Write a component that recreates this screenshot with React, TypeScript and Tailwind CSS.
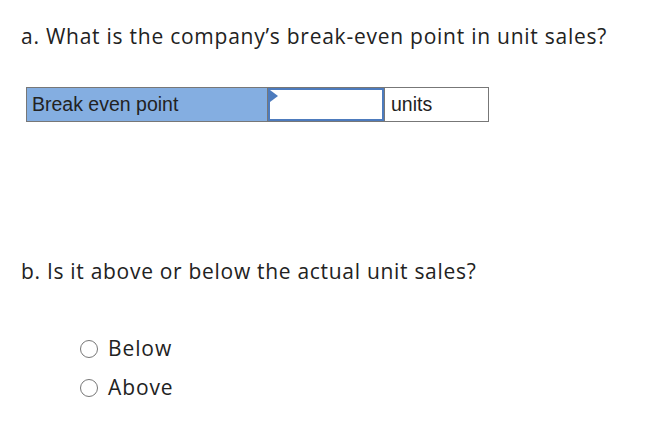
import React from 'react';

const Radio: React.FC<{ label: string }> = ({ label }) => (
  <label className="flex items-center gap-[10px] h-[39px]">
    <span className="w-[18px] h-[18px] rounded-full border border-[#777] bg-white shrink-0" />
    <span className="text-[21px] tracking-[0.9px] text-[#222]">{label}</span>
  </label>
);

export default function App() {
  return (
    <div className="w-[652px] h-[430px] bg-white pl-[21px] pt-[22px] font-['Open_Sans',sans-serif] text-[#222]">
      <p className="text-[21px] leading-[28px] tracking-[0.75px]">a. What is the company’s break-even point in unit sales?</p>

      <div className="mt-[37px] ml-[5px] flex w-[463px] h-[35px] border border-[#777] font-['Liberation_Sans',Arial,sans-serif] text-[19.5px]">
        <div className="w-[241px] bg-[#84aee1] border-r border-[#777] flex items-center pl-[5px] text-[#222]">
          Break even point
        </div>
        <div className="relative w-[116px] border-2 border-[#4d7bbd] bg-white">
          <span className="absolute left-0 top-0 w-0 h-0 border-t-[6px] border-b-[6px] border-l-[8px] border-t-transparent border-b-transparent border-l-[#4d7bbd]" />
        </div>
        <div className="flex-1 border-l border-[#777] flex items-center pl-[6px] text-[#222]">units</div>
      </div>

      <p className="mt-[135px] text-[21px] leading-[28px] tracking-[0.7px]">b. Is it above or below the actual unit sales?</p>

      <div className="mt-[44px] ml-[59px]">
        <Radio label="Below" />
        <Radio label="Above" />
      </div>
    </div>
  );
}
